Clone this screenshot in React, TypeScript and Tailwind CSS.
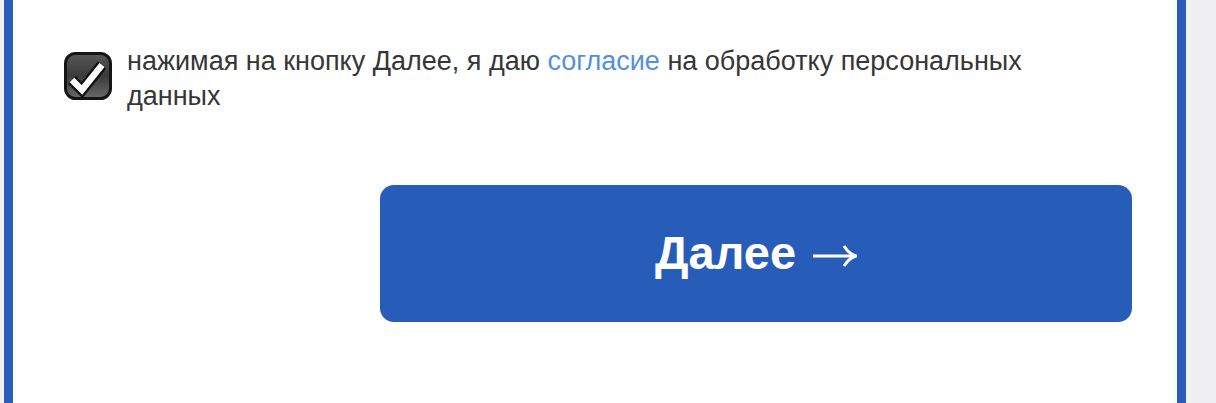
import React from "react";

function CheckIcon() {
  return (
    <svg width="48" height="48" viewBox="0 0 48 48" className="shrink-0">
      <defs>
        <linearGradient id="cbg" x1="0" y1="0" x2="0" y2="1">
          <stop offset="0" stopColor="#585858" />
          <stop offset="0.5" stopColor="#3a3a3a" />
          <stop offset="1" stopColor="#6a6a6a" />
        </linearGradient>
      </defs>
      <rect x="1.5" y="1.5" width="45" height="45" rx="10" fill="url(#cbg)" stroke="#151515" strokeWidth="3" />
      <path d="M8 28 L18 38 L38 13" fill="none" stroke="#111" strokeWidth="11" strokeLinejoin="miter" strokeLinecap="butt" />
      <path d="M8 28 L18 38 L38 13" fill="none" stroke="#fff" strokeWidth="6.5" strokeLinejoin="miter" strokeLinecap="butt" />
    </svg>
  );
}

function Arrow() {
  return (
    <svg width="44" height="22" viewBox="0 0 44 22" className="mt-[4px]">
      <path d="M0 11 H42" stroke="#fff" strokeWidth="3" />
      <path d="M31 1 Q36 9 43 11 Q36 13 31 21" fill="none" stroke="#fff" strokeWidth="3" />
    </svg>
  );
}

export default function App() {
  return (
    <div className="w-[1216px] h-[403px] bg-[#f0f0f2] overflow-hidden flex" style={{ fontFamily: '"Liberation Sans", Arial, sans-serif' }}>
      <div className="ml-[4px] w-[1182px] h-full bg-white border-x-[9px] border-[#2a5cb9] pt-[52px] pl-[51px] pr-[45px]">
        <div className="flex items-start gap-[15px]">
          <CheckIcon />
          <p className="text-[27px] leading-[35px] text-[#363636] mt-[-8px] w-[940px]">
            нажимая на кнопку Далее, я даю <span className="text-[#5590df]">согласие</span> на обработку персональных данных
          </p>
        </div>
        <div className="flex justify-end mt-[71px]">
          <button className="w-[752px] h-[137px] rounded-[14px] bg-[#285cb9] text-white font-bold text-[47px] flex items-center justify-center gap-[17px]">
            <span>Далее</span>
            <Arrow />
          </button>
        </div>
      </div>
    </div>
  );
}
